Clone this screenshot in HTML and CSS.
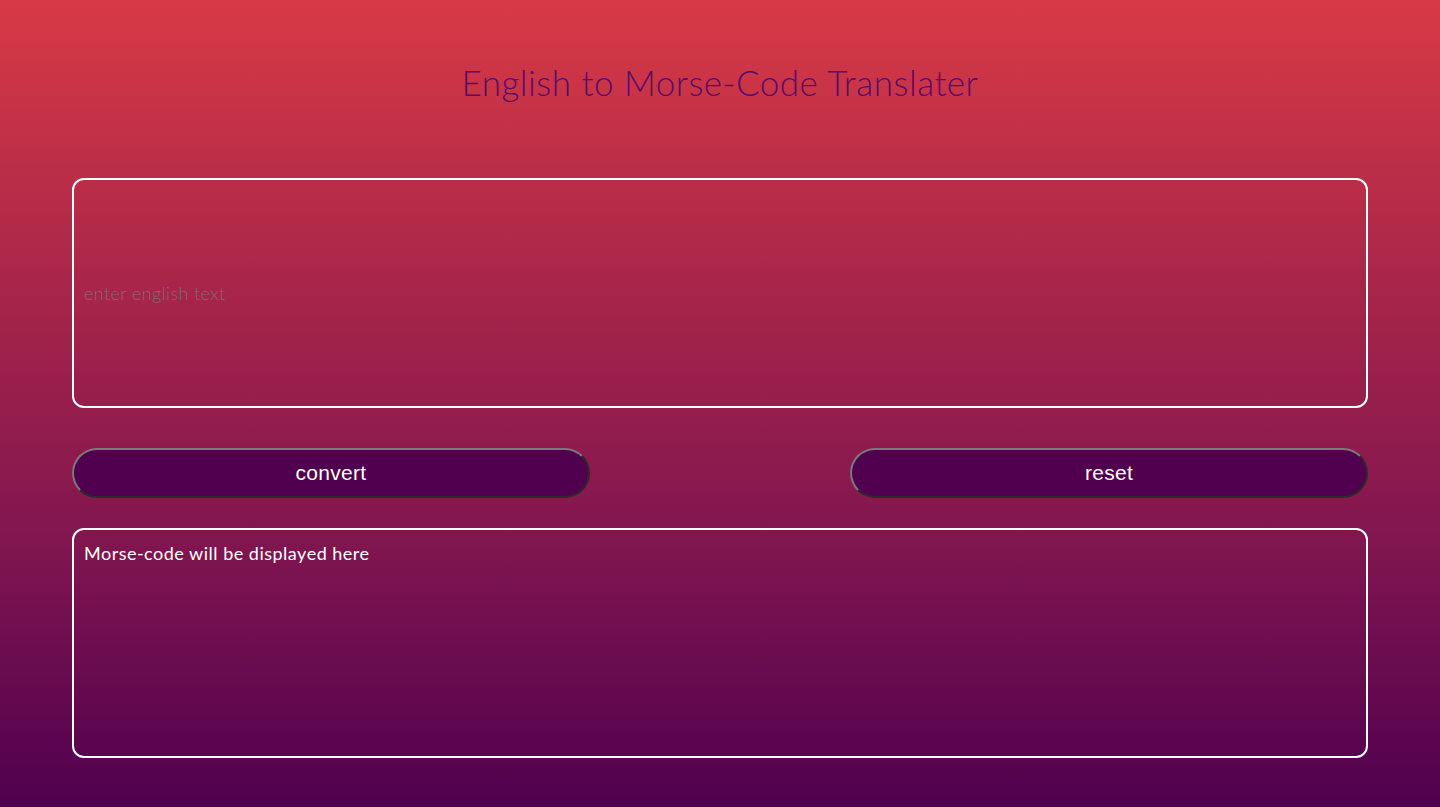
FILE: index.html
```html
<!DOCTYPE html>
<html lang="en">
<head>
<meta charset="utf-8">
<title>English to Morse-Code Translater</title>
<link rel="stylesheet" href="styles.css">
</head>
<body>
<main class="app">
  <h1 class="title">English to Morse-Code Translater</h1>
  <input class="input-box" type="text" placeholder="enter english text">
  <div class="actions">
    <button class="btn" type="button">convert</button>
    <button class="btn" type="button">reset</button>
  </div>
  <div class="output">Morse-code will be displayed here</div>
</main>
</body>
</html>
```

FILE: styles.css
```css
* { box-sizing: border-box; }
html, body { margin: 0; height: 100%; }
body {
  min-height: 807px;
  background: linear-gradient(to bottom, #d83a45 0%, #a2234a 40%, #7d1450 70%, #4f004e 100%);
  font-family: "Lato", "Noto Sans", sans-serif;
  color: #fff;
}
.app {
  width: 1296px;
  margin: 0 auto;
  padding-top: 60px;
  display: flex;
  flex-direction: column;
}
.title {
  margin: 0;
  text-align: center;
  font-weight: 300;
  font-size: 35px;
  line-height: 44px;
  letter-spacing: 0.5px;
  color: #5a0b69;
}
.input-box {
  margin-top: 74px;
  height: 230px;
  width: 100%;
  border: 2px solid #fff;
  border-radius: 12px;
  background: transparent;
  padding: 0 10px;
  font-family: "Lato", sans-serif;
  font-weight: 300;
  font-size: 18px;
  letter-spacing: 0.4px;
  color: #fff;
  outline: none;
}
.input-box::placeholder { color: #806a72; }
.actions {
  margin-top: 40px;
  display: flex;
  justify-content: space-between;
}
.btn {
  width: 518px;
  height: 50px;
  border-radius: 25px;
  border: 2px solid;
  border-color: #7a7a7a #2b2b2b #2b2b2b #7a7a7a;
  background: #510050;
  color: #fff;
  font-family: "Liberation Sans", Arial, sans-serif;
  font-size: 21px;
  letter-spacing: 0.3px;
}
.output {
  margin-top: 30px;
  height: 230px;
  border: 2px solid #fff;
  border-radius: 12px;
  padding: 12px 10px;
  font-size: 18px;
  line-height: 22px;
  font-weight: 400;
  letter-spacing: 0.5px;
}
```
